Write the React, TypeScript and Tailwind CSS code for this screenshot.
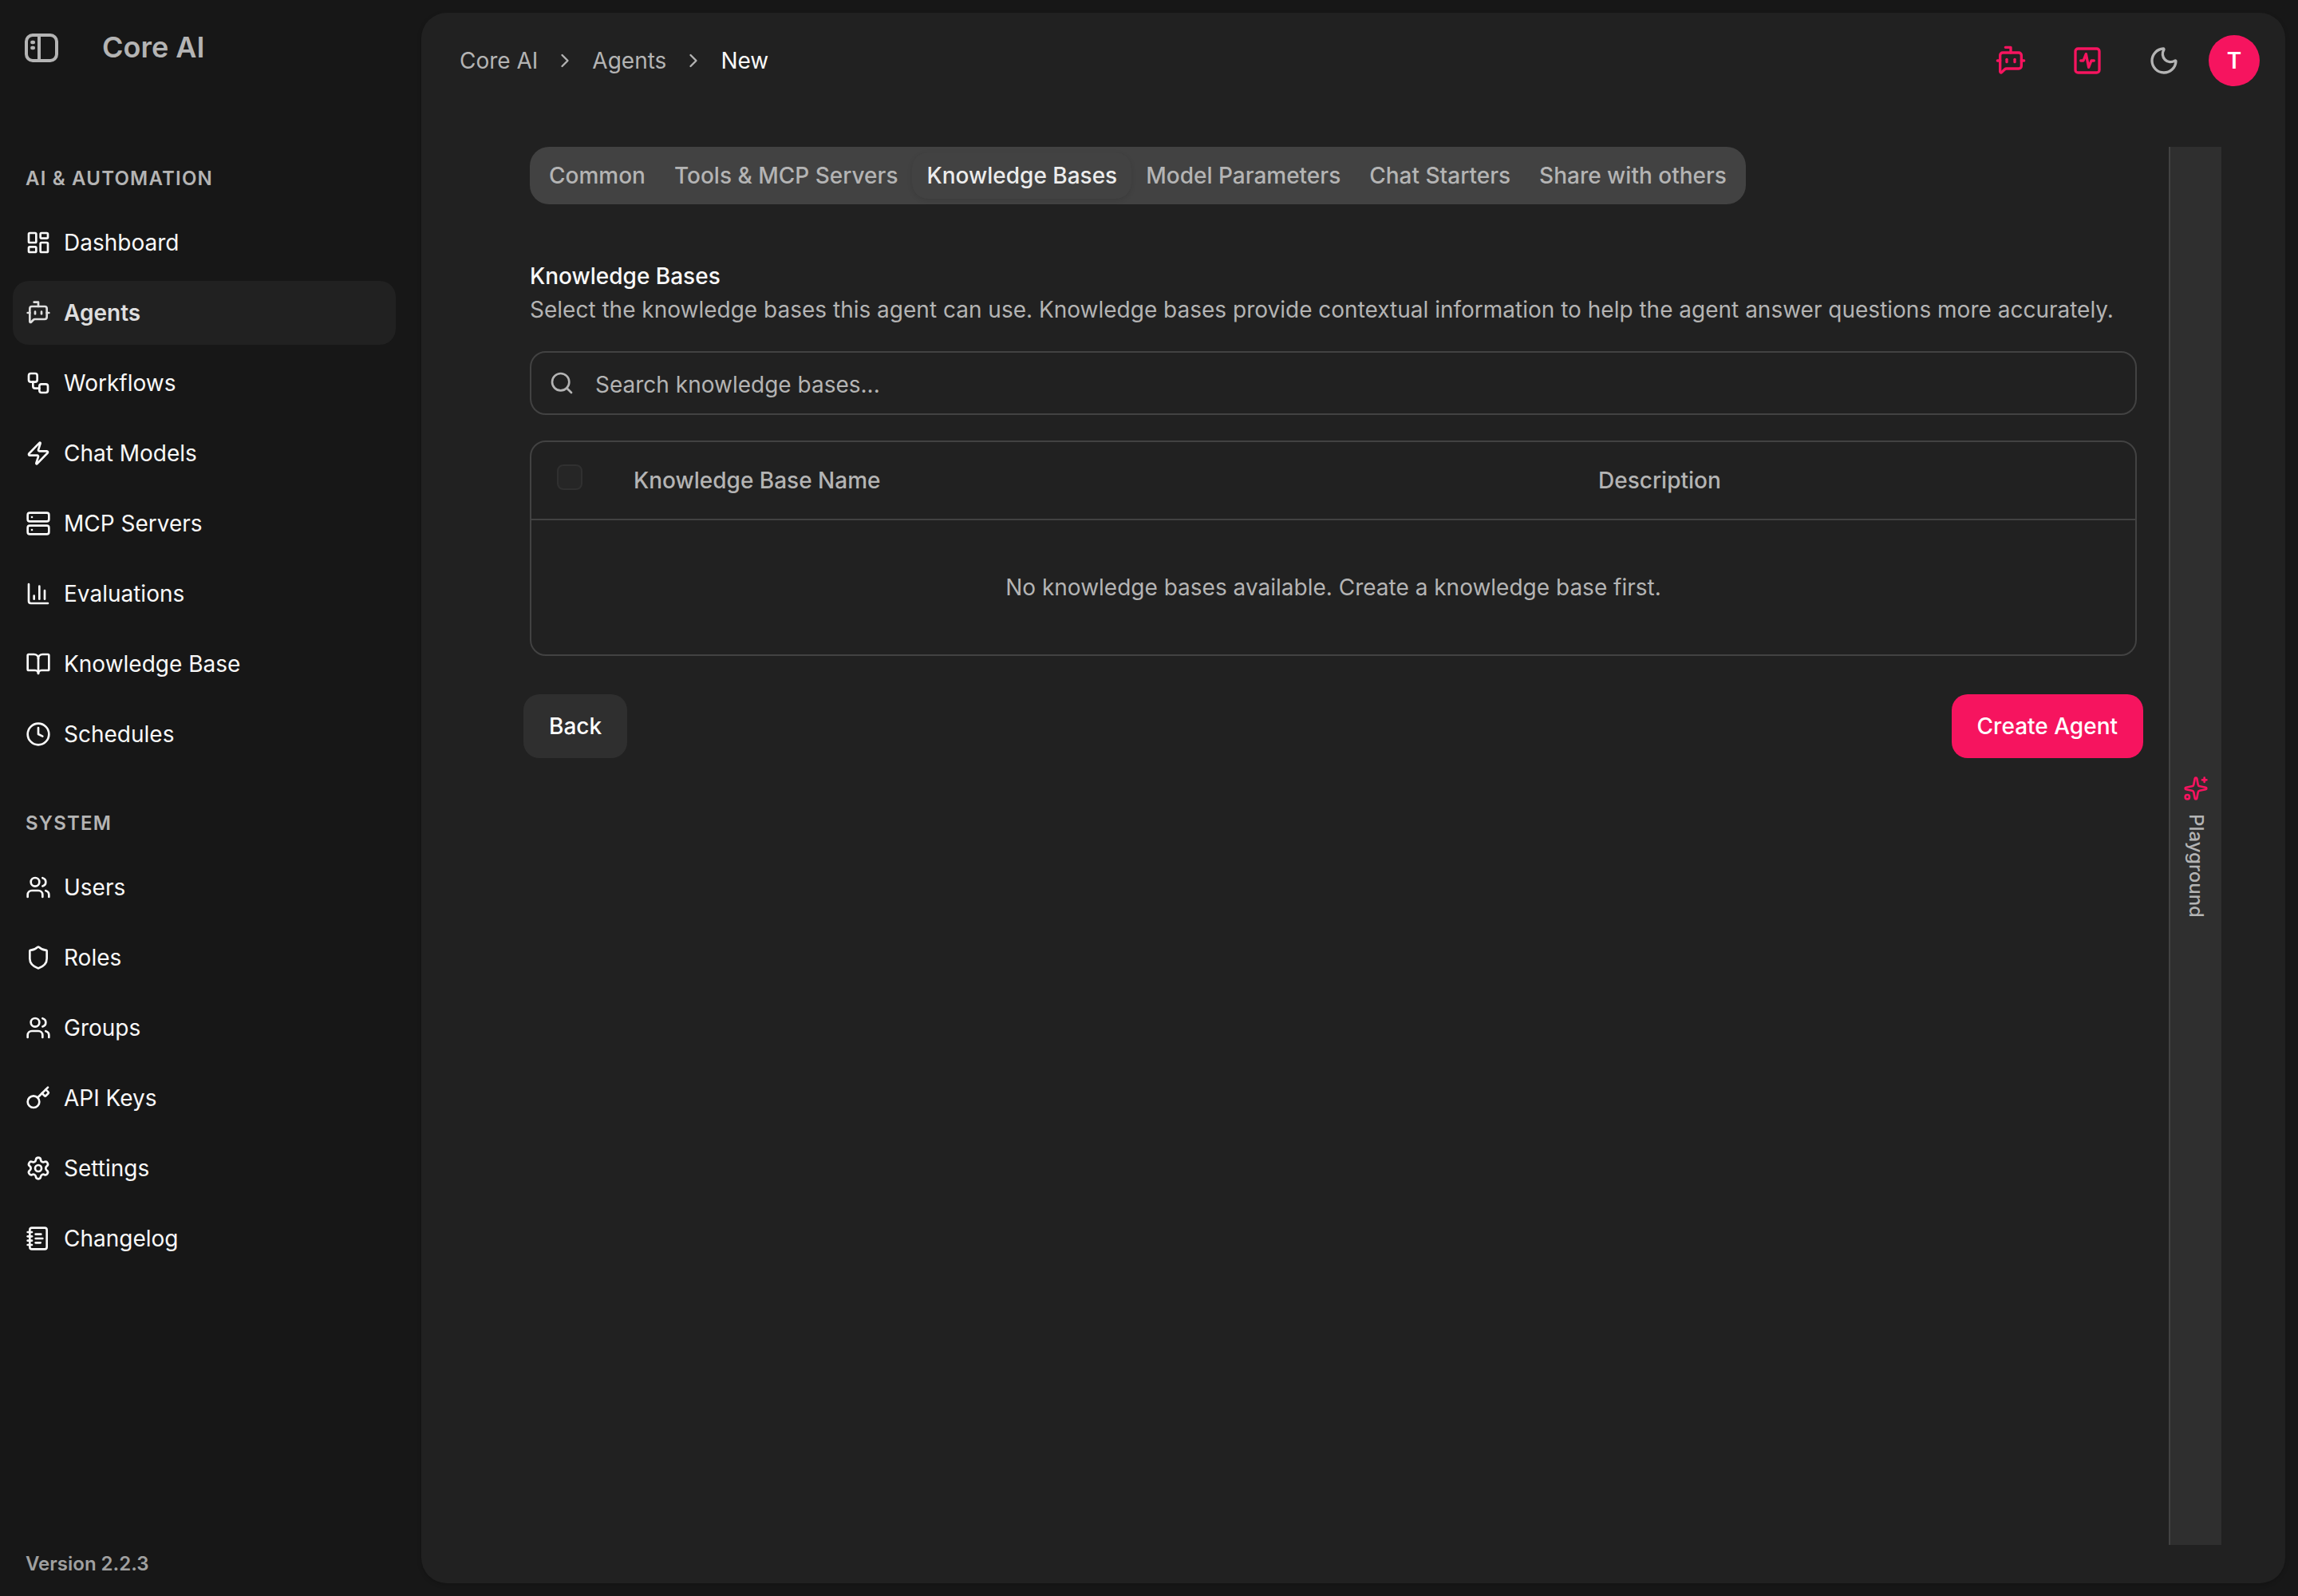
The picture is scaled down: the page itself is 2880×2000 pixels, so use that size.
import {
	BookOpen,
	BotMessageSquare,
	ChartColumn,
	ChevronRight,
	Clock,
	Key,
	LayoutDashboard,
	type LucideIcon,
	Moon,
	NotebookText,
	Search,
	Server,
	Settings,
	Shield,
	Sparkles,
	SquareActivity,
	Users,
	Workflow,
	Zap,
} from "lucide-react";

type NavItem = { label: string; icon: LucideIcon; active?: boolean };

const sections: { title: string; items: NavItem[] }[] = [
	{
		title: "AI & Automation",
		items: [
			{ label: "Dashboard", icon: LayoutDashboard },
			{ label: "Agents", icon: BotMessageSquare, active: true },
			{ label: "Workflows", icon: Workflow },
			{ label: "Chat Models", icon: Zap },
			{ label: "MCP Servers", icon: Server },
			{ label: "Evaluations", icon: ChartColumn },
			{ label: "Knowledge Base", icon: BookOpen },
			{ label: "Schedules", icon: Clock },
		],
	},
	{
		title: "System",
		items: [
			{ label: "Users", icon: Users },
			{ label: "Roles", icon: Shield },
			{ label: "Groups", icon: Users },
			{ label: "API Keys", icon: Key },
			{ label: "Settings", icon: Settings },
			{ label: "Changelog", icon: NotebookText },
		],
	},
];

const tabs = [
	"Common",
	"Tools & MCP Servers",
	"Knowledge Bases",
	"Model Parameters",
	"Chat Starters",
	"Share with others",
];

function SidebarToggle() {
	return (
		<svg viewBox="0 0 44 40" className="h-10 w-11" fill="none" stroke="currentColor">
			<rect x="3" y="4" width="38" height="32" rx="8" strokeWidth="4" />
			<path d="M19 4v32" strokeWidth="4" />
			<path d="M10.3 13h1.6M10.3 20h1.6" strokeWidth="4.4" strokeLinecap="round" />
		</svg>
	);
}

function Sidebar() {
	return (
		<aside className="flex w-[528px] shrink-0 flex-col px-4">
			<div className="flex h-[152px] items-start pt-8 pl-3.5 text-[#b4b4b4]">
				<button className="mt-2">
					<SidebarToggle />
				</button>
				<span className="pl-[54px] text-4xl leading-[54px] font-semibold">Core AI</span>
			</div>
			<nav>
				{sections.map((section) => (
					<div key={section.title}>
						<h2 className="h-28 px-4 pt-14 text-2xl leading-8 font-semibold tracking-wider text-[#b4b4b4] uppercase">
							{section.title}
						</h2>
						<ul className="flex w-[480px] flex-col gap-2">
							{section.items.map(({ label, icon: Icon, active }) => (
								<li
									key={label}
									className={
										active
											? "flex h-20 items-center gap-4 rounded-[20px] bg-[#212121] px-4 text-[28px] font-semibold text-[#dedede]"
											: "flex h-20 items-center gap-4 rounded-[20px] px-4 text-[28px] text-[#f9f9f9]"
									}
								>
									<Icon className="size-8" />
									<span className="leading-10">{label}</span>
								</li>
							))}
						</ul>
					</div>
				))}
			</nav>
			<p className="mt-auto mb-6 px-4 text-2xl leading-8 font-semibold text-[#a0a0a0]">
				Version 2.2.3
			</p>
		</aside>
	);
}

function Header() {
	return (
		<header className="flex h-[120px] shrink-0 items-center justify-between pr-8 pl-12">
			<div className="flex items-center gap-5 text-[28px] leading-10 text-[#b4b4b4]">
				<span>Core AI</span>
				<ChevronRight className="size-7" />
				<span>Agents</span>
				<ChevronRight className="size-7" />
				<span className="text-[#f9f9f9]">New</span>
			</div>
			<div className="flex items-center gap-4 text-[#f6145f]">
				<button className="flex size-20 items-center justify-center">
					<BotMessageSquare className="size-10" />
				</button>
				<button className="flex size-20 items-center justify-center">
					<SquareActivity className="size-10" />
				</button>
				<button className="flex size-20 items-center justify-center text-[#b4b4b4]">
					<Moon className="size-10" />
				</button>
				<div className="flex size-16 items-center justify-center rounded-full bg-[#f6145f] text-[28px] leading-10 font-semibold text-white">
					T
				</div>
			</div>
		</header>
	);
}

function KnowledgeBasesForm() {
	return (
		<div className="flex-1">
			<div className="px-2">
				<div className="inline-flex h-[72px] items-center rounded-3xl bg-[#424242] px-1.5 align-top text-[28px] font-medium text-[#b4b4b4]">
					{tabs.map((tab) => (
						<button
							key={tab}
							className={
								tab === "Knowledge Bases"
									? "h-[58px] rounded-[20px] bg-[#424242] px-[18px] leading-10 text-[#ececec] shadow-[0_2px_6px_0_rgb(0_0_0/0.1)]"
									: "h-[58px] px-[18px] leading-10"
							}
						>
							{tab}
						</button>
					))}
				</div>

				<h3 className="mt-[76px] text-[28px] leading-7 font-medium text-[#f9f9f9]">
					Knowledge Bases
				</h3>
				<p className="mt-2 text-[28px] leading-10 text-[#b4b4b4]">
					Select the knowledge bases this agent can use. Knowledge bases provide contextual
					information to help the agent answer questions more accurately.
				</p>

				<div className="mt-8 flex h-20 items-center gap-[26px] rounded-[20px] border-2 border-[#424242] px-[22px] text-[28px] text-[#b4b4b4]">
					<Search className="size-8" />
					<span className="pt-1 leading-10">Search knowledge bases...</span>
				</div>

				<div className="mt-8 rounded-[20px] border-2 border-[#424242] text-[28px] leading-10 text-[#b4b4b4]">
					<div className="flex h-[98px] items-center border-b-2 border-[#424242] pl-8 font-medium">
						<div className="mb-2 size-8 rounded-lg border-2 border-[#303030] bg-[#262626]" />
						<div className="w-[1209px] shrink-0 pl-16">Knowledge Base Name</div>
						<div className="pl-16">Description</div>
					</div>
					<div className="flex h-[168px] items-center justify-center">
						No knowledge bases available. Create a knowledge base first.
					</div>
				</div>
			</div>

			<div className="mt-12 flex justify-between text-[28px] leading-10 font-medium text-white">
				<button className="h-20 rounded-[20px] bg-[#2f2f2f] px-8">Back</button>
				<button className="h-20 rounded-[20px] bg-[#f6145f] px-8">Create Agent</button>
			</div>
		</div>
	);
}

export default function App() {
	return (
		<div className="flex h-[2000px] w-[2880px] overflow-hidden bg-[#171717] font-['Inter',sans-serif]">
			<Sidebar />
			<main className="my-4 mr-4 flex flex-1 flex-col rounded-[32px] bg-[#212121] shadow-[0_2px_6px_0_rgb(0_0_0/0.1),0_2px_4px_-2px_rgb(0_0_0/0.1)]">
				<Header />
				<div className="flex flex-1 gap-8 pt-12 pr-20 pb-12 pl-32">
					<KnowledgeBasesForm />
					<div className="flex w-[66px] flex-col items-center justify-center gap-4 border-l-2 border-[#424242] bg-[#2f2f2f] pt-0.5">
						<Sparkles className="size-8 text-[#f6145f]" />
						<span className="text-2xl leading-8 font-medium text-[#b4b4b4] [writing-mode:vertical-rl]">
							Playground
						</span>
					</div>
				</div>
			</main>
		</div>
	);
}
